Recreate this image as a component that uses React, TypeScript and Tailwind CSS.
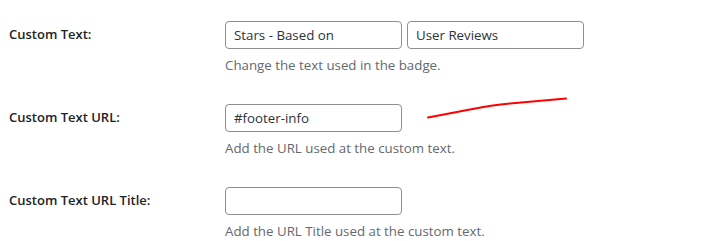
import React from 'react';

const rows = [
  {
    label: 'Custom Text:',
    values: ['Stars - Based on', 'User Reviews'],
    help: 'Change the text used in the badge.',
  },
  {
    label: 'Custom Text URL:',
    values: ['#footer-info'],
    help: 'Add the URL used at the custom text.',
  },
  {
    label: 'Custom Text URL Title:',
    values: [''],
    help: 'Add the URL Title used at the custom text.',
  },
];

export default function App() {
  return (
    <div
      className="relative w-[710px] h-[241px] overflow-hidden bg-white pt-[21px] pl-[9px]"
      style={{ fontFamily: '"Open Sans", "Noto Sans", sans-serif' }}
    >
      {rows.map((row) => (
        <div key={row.label} className="flex h-[83px]">
          <div className="w-[216px] h-[28px] flex items-center text-[13px] font-semibold text-[#1d2327]">
            {row.label}
          </div>
          <div className="flex flex-col">
            <div className="flex gap-[5px]">
              {row.values.map((v, i) => (
                <input
                  key={i}
                  readOnly
                  value={v}
                  className="w-[177px] h-[28px] px-[8px] border border-[#8c8f94] rounded-[4px] text-[13.3px] text-[#2c3338] bg-white outline-none"
                />
              ))}
            </div>
            <p className="mt-[6px] text-[13.3px] leading-[20px] text-[#646970]">{row.help}</p>
          </div>
        </div>
      ))}

      {/* red annotation stroke */}
      <svg className="absolute left-0 top-0 pointer-events-none" width="710" height="241">
        <path
          d="M428 117.5 L470 109.5 Q492 105 510 103.5 L566 98.5"
          fill="none"
          stroke="#ff0000"
          strokeWidth="2"
          strokeLinecap="round"
          strokeLinejoin="round"
        />
      </svg>
    </div>
  );
}
